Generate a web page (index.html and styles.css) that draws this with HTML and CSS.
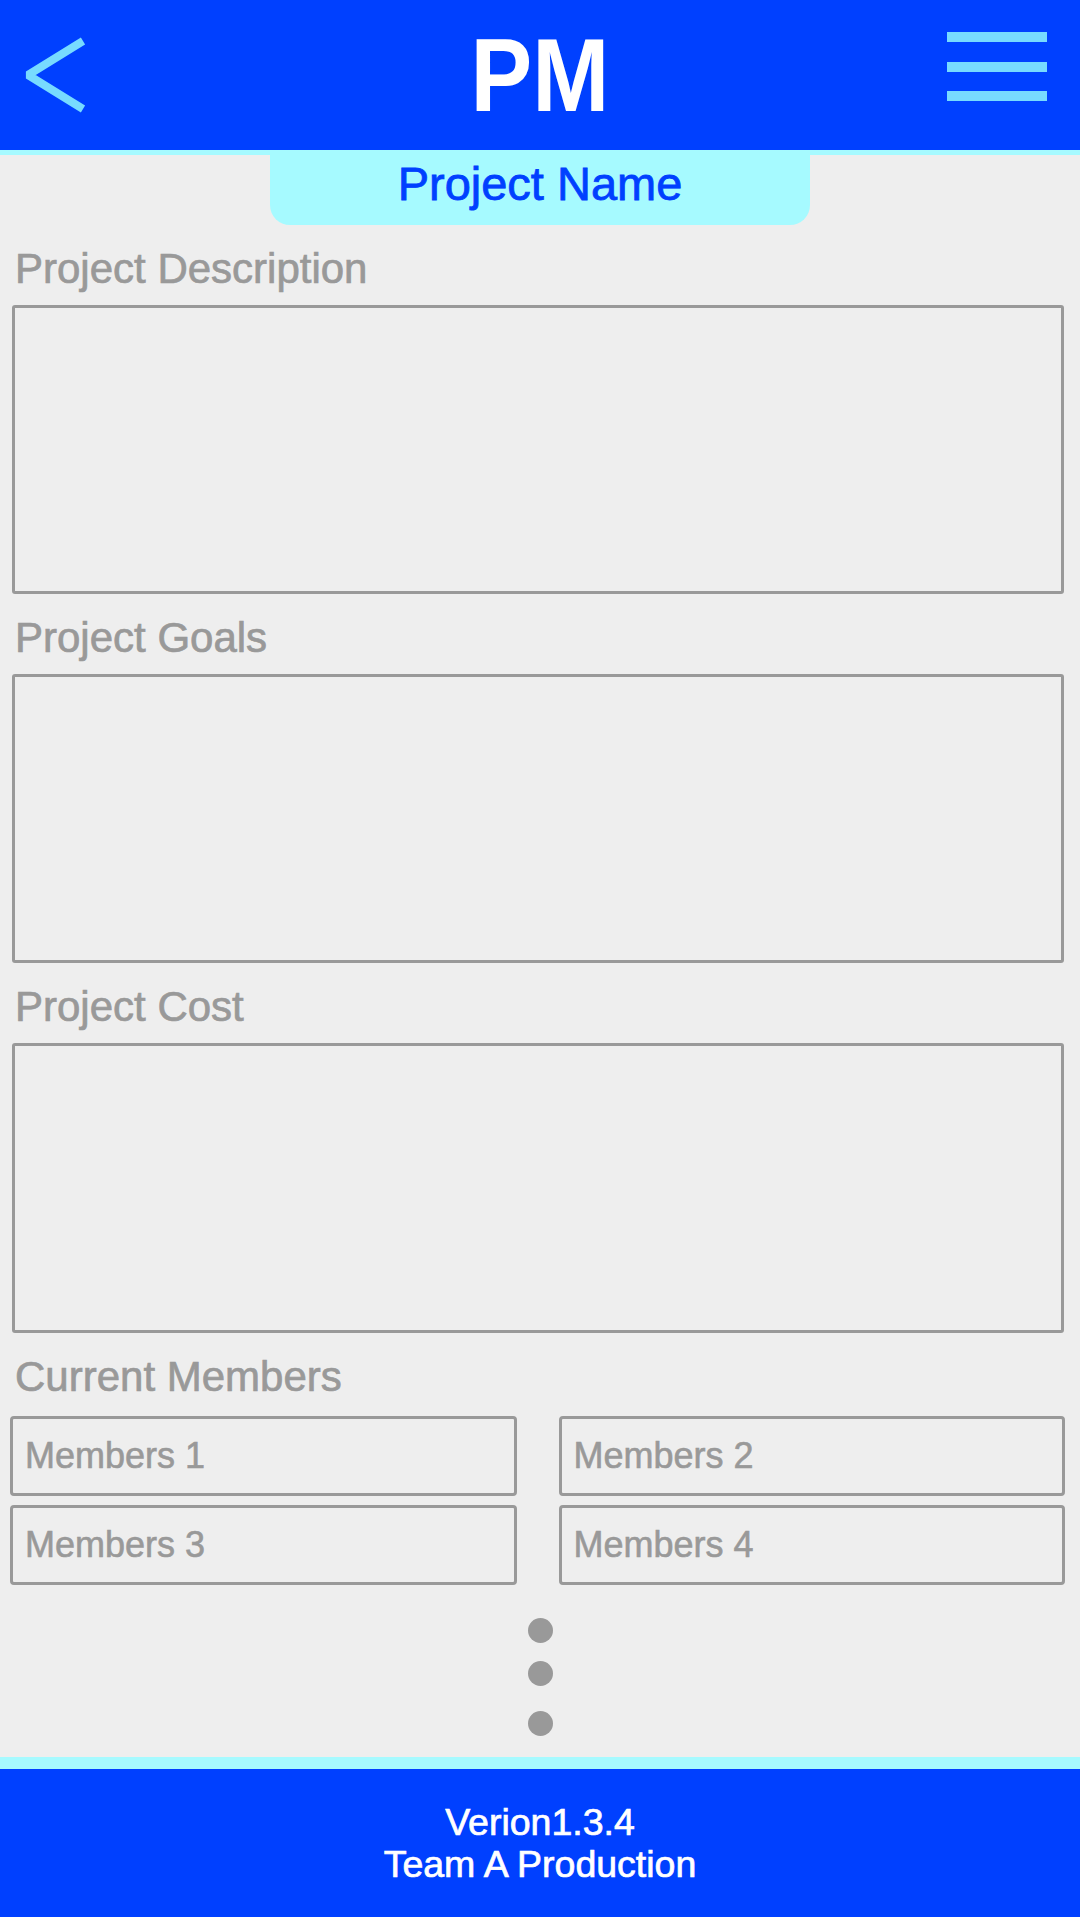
FILE: index.html
```html
<!DOCTYPE html>
<html lang="en">
<head>
<meta charset="utf-8">
<title>PM</title>
<link rel="stylesheet" href="styles.css">
</head>
<body>
<div class="page">
  <header class="topbar">
    <div class="topbar-left">
      <svg class="back" width="100" height="150" viewBox="0 0 100 150" aria-hidden="true">
        <polyline points="83,41 28,75 83,109" fill="none" stroke="#77dbff" stroke-width="8" stroke-linejoin="bevel" stroke-linecap="butt"/>
      </svg>
    </div>
    <div class="title">PM</div>
    <div class="topbar-right">
      <div class="burger"><span></span><span></span><span></span></div>
    </div>
  </header>
  <div class="tab-row"><div class="tab">Project Name</div></div>

  <main class="form">
    <section class="field">
      <div class="label">Project Description</div>
      <div class="box"></div>
    </section>
    <section class="field">
      <div class="label">Project Goals</div>
      <div class="box"></div>
    </section>
    <section class="field">
      <div class="label">Project Cost</div>
      <div class="box box-last"></div>
    </section>
    <section class="field">
      <div class="label">Current Members</div>
    </section>
  </main>
  <div class="members">
    <div class="member">Members 1</div>
    <div class="member">Members 2</div>
    <div class="member">Members 3</div>
    <div class="member">Members 4</div>
  </div>
  <div class="dots">
    <span class="dot d1"></span>
    <span class="dot d2"></span>
    <span class="dot d3"></span>
  </div>
  <footer class="footer">
    <div>Verion1.3.4</div>
    <div>Team A Production</div>
  </footer>
</div>
</body>
</html>
```

FILE: styles.css
```css
html {
  background: #ffffff;
}
body {
  margin: 0;
  font-family: "Liberation Sans", Arial, sans-serif;
}
.page {
  width: 1080px;
  height: 1917px;
  background: #eeeeee;
  display: flex;
  flex-direction: column;
}
.topbar {
  height: 150px;
  background: #0040ff;
  border-bottom: 5px solid #a6faff;
  display: grid;
  grid-template-columns: 1fr auto 1fr;
}
.topbar-left {
  display: flex;
}
.back {
  display: block;
}
.title {
  color: #ffffff;
  font-weight: bold;
  font-size: 104px;
  line-height: 150px;
  height: 150px;
  transform: scaleX(0.89);
}
.topbar-right {
  display: flex;
  justify-content: flex-end;
  padding: 32px 33px 0 0;
}
.burger {
  width: 100px;
  display: flex;
  flex-direction: column;
  gap: 19.5px;
}
.burger span {
  display: block;
  height: 10px;
  background: #77dbff;
}
.tab-row {
  display: flex;
  justify-content: center;
}
.tab {
  width: 540px;
  height: 70px;
  background: #a6faff;
  border-radius: 0 0 20px 20px;
  color: #0040ff;
  font-size: 47px;
  line-height: 58px;
  text-align: center;
  -webkit-text-stroke: 0.8px #0040ff;
}
.form {
  padding: 20px 16px 0 12px;
  display: flex;
  flex-direction: column;
  gap: 20px;
}
.label {
  color: #999999;
  font-size: 42px;
  line-height: 48px;
  padding-left: 3px;
  margin-bottom: 12px;
  -webkit-text-stroke: 0.7px #999999;
}
.box {
  box-sizing: border-box;
  height: 289px;
  border: 3px solid #999999;
  border-radius: 3px;
}
.box-last {
  height: 290px;
}
.members {
  margin-top: 3px;
  padding: 0 15px 0 10px;
  display: grid;
  grid-template-columns: 1fr 1fr;
  column-gap: 42px;
  row-gap: 9px;
}
.member {
  box-sizing: border-box;
  height: 80px;
  border: 3px solid #999999;
  border-radius: 4px;
  display: flex;
  align-items: center;
  padding-left: 12px;
  color: #999999;
  font-size: 36px;
  -webkit-text-stroke: 0.6px #999999;
}
.dots {
  display: flex;
  flex-direction: column;
  align-items: center;
  padding-top: 33px;
  padding-bottom: 21px;
}
.dot {
  width: 25px;
  height: 25px;
  border-radius: 50%;
  background: #999999;
}
.d2 {
  margin-top: 18px;
}
.d3 {
  margin-top: 25px;
}
.footer {
  margin-top: auto;
  height: 150px;
  border-top: 12px solid #a6faff;
  background: #0040ff;
  color: #ffffff;
  font-size: 37.5px;
  line-height: 42px;
  text-align: center;
  display: flex;
  flex-direction: column;
  justify-content: center;
  -webkit-text-stroke: 0.7px #ffffff;
}
```
